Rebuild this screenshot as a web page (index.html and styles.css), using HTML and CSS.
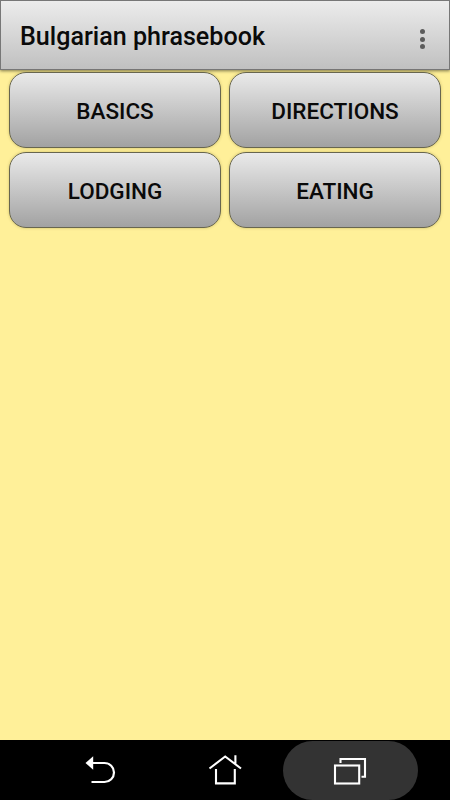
FILE: index.html
```html
<!DOCTYPE html>
<html lang="en">
<head>
    <meta charset="UTF-8">
    <meta name="viewport" content="width=device-width, initial-scale=1.0">
    <title>Bulgarian phrasebook</title>
    <link rel="stylesheet" href="styles.css">
</head>
<body>

<header class="app-bar">
    <h1>Bulgarian phrasebook</h1>
    <button class="menu-btn" aria-label="Menu">
        <span class="dot"></span>
        <span class="dot"></span>
        <span class="dot"></span>
    </button>
</header>

<main class="categories">
    <button class="category">BASICS</button>
    <button class="category">DIRECTIONS</button>
    <button class="category">LODGING</button>
    <button class="category">EATING</button>
</main>

<nav class="nav-bar">
    <button class="nav-btn" aria-label="Back">
        <svg width="34" height="34" viewBox="0 0 34 34">
            <path d="M2.5 10 L10.2 3.3 V16.7 Z" fill="#fff"/>
            <path d="M9 10 H21.5 A9.4 9.4 0 0 1 21.5 29 H8.5" fill="none" stroke="#fff" stroke-width="2.2"/>
        </svg>
    </button>
    <button class="nav-btn" aria-label="Home">
        <svg width="34" height="34" viewBox="0 0 34 34">
            <path d="M1.5 15.5 L17.2 3.5 L33 15.5 M27.4 2.3 V11 M8 16 V30.4 H26.8 V16" fill="none" stroke="#fff" stroke-width="2.1"/>
        </svg>
    </button>
    <button class="nav-btn active" aria-label="Recent apps">
        <svg width="34" height="34" viewBox="0 0 34 34">
            <path d="M7.5 9 V5 H32 V22.8 H28.5" fill="none" stroke="#fff" stroke-width="2.1"/>
            <rect x="2" y="11.5" width="24.2" height="18" fill="none" stroke="#fff" stroke-width="2.1"/>
        </svg>
    </button>
</nav>

</body>
</html>
```

FILE: styles.css
```css
* {
    box-sizing: border-box;
}
body {
    display: flex;
    flex-direction: column;
    height: 800px;
    margin: 0;
    background-color: #fff099; /* Pale yellow */
    color: #0a0a0a;
    font-family: Roboto, sans-serif;
    overflow: hidden;
}
button {
    margin: 0;
    padding: 0;
    border: none;
    background: none;
    color: inherit;
    font-family: inherit;
}
.app-bar {
    display: flex;
    align-items: center;
    justify-content: space-between;
    height: 70px;
    padding: 0 24px 0 20px;
    border: 1px solid #777777;
    background: linear-gradient(#ececec, #c0c0c0);
    box-shadow: 0 1px 3px rgba(0, 0, 0, 0.5);
}
.app-bar h1 {
    margin: 0 0 0 -1px;
    padding-top: 4px;
    font-size: 25.1px;
    font-weight: 500;
    line-height: 30px;
}
.menu-btn {
    display: flex;
    flex-direction: column;
    gap: 2.5px;
    padding-top: 8px;
}
.dot {
    width: 5px;
    height: 5px;
    border-radius: 50%;
    background-color: #5c5c5c;
}
.categories {
    display: grid;
    grid-template-columns: 212px 212px;
    grid-auto-rows: 76px;
    gap: 4px 8px;
    flex: 1;
    padding: 2px 9px;
}
.category {
    padding-top: 1px;
    border: 1px solid #68664f;
    border-radius: 17px;
    background: linear-gradient(#eaeaea, #a2a2a2);
    box-shadow: 0 0 3px rgba(90, 80, 0, 0.3);
    font-size: 22.5px;
    font-weight: 500;
}
.nav-bar {
    display: flex;
    justify-content: center;
    height: 60px;
    background-color: #000000;
}
.nav-btn {
    display: flex;
    align-items: center;
    justify-content: center;
    flex: 0 0 125px;
    height: 60px;
}
/* Highlight is wider than its slot */
.nav-btn.active {
    flex-basis: 135px;
    height: 59px;
    margin: 1px -5px 0;
    border-radius: 30px;
    background-color: #333333;
}
```
